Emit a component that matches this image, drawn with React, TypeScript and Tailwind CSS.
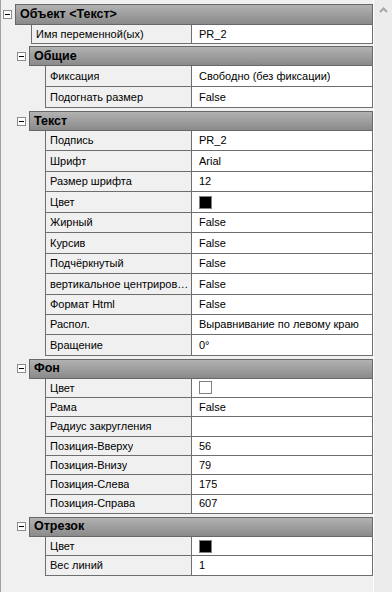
import React from "react";

type Row = { name: string; value?: string; color?: string };

type Section = {
  title: string;
  headerH: string;
  rowH: string;
  gap: string;
  rows: Row[];
};

const sections: Section[] = [
  {
    title: "Общие",
    headerH: "h-[20px]",
    rowH: "h-[21px]",
    gap: "mb-[3px]",
    rows: [
      { name: "Фиксация", value: "Свободно (без фиксации)" },
      { name: "Подогнать размер", value: "False" },
    ],
  },
  {
    title: "Текст",
    headerH: "h-[20px]",
    rowH: "h-[20.45px]",
    gap: "mb-[3px]",
    rows: [
      { name: "Подпись", value: "PR_2" },
      { name: "Шрифт", value: "Arial" },
      { name: "Размер шрифта", value: "12" },
      { name: "Цвет", color: "#000000" },
      { name: "Жирный", value: "False" },
      { name: "Курсив", value: "False" },
      { name: "Подчёркнутый", value: "False" },
      { name: "вертикальное центрирование", value: "False" },
      { name: "Формат Html", value: "False" },
      { name: "Распол.", value: "Выравнивание по левому краю" },
      { name: "Вращение", value: "0°" },
    ],
  },
  {
    title: "Фон",
    headerH: "h-[20px]",
    rowH: "h-[19.29px]",
    gap: "mb-[3px]",
    rows: [
      { name: "Цвет", color: "#ffffff" },
      { name: "Рама", value: "False" },
      { name: "Радиус закругления", value: "" },
      { name: "Позиция-Вверху", value: "56" },
      { name: "Позиция-Внизу", value: "79" },
      { name: "Позиция-Слева", value: "175" },
      { name: "Позиция-Справа", value: "607" },
    ],
  },
  {
    title: "Отрезок",
    headerH: "h-[20px]",
    rowH: "h-[19.5px]",
    gap: "",
    rows: [
      { name: "Цвет", color: "#000000" },
      { name: "Вес линий", value: "1" },
    ],
  },
];

const Minus = () => (
  <div className="w-[9px] h-[9px] border border-[#8c8c8c] bg-white flex items-center justify-center">
    <div className="w-[5px] h-px bg-black" />
  </div>
);

const Header = ({ title, h }: { title: string; h: string }) => (
  <div className={`flex ${h}`}>
    <div className="w-[14px] shrink-0 flex items-center justify-center pr-px">
      <Minus />
    </div>
    <div className="flex-1 flex items-center pl-[4px] border border-[#686868] bg-gradient-to-b from-[#b2b2b2] to-[#8a8a8a] text-[12.5px] font-bold text-black">
      {title}
    </div>
  </div>
);

const PropRow = ({ row, h, indent }: { row: Row; h: string; indent: string }) => (
  <div className={`flex ${h}`}>
    <div className={`${indent} shrink-0`} />
    <div className="flex-1 min-w-0 flex items-center pl-[4px] pr-[2px] bg-[#f0f0f0] border-l border-b border-[#6e6e6e]">
      <span className="truncate">{row.name}</span>
    </div>
    <div className="w-[182px] shrink-0 flex items-center pl-[7px] bg-white border-l border-r border-b border-[#6e6e6e]">
      {row.color ? (
        <div
          className="w-[13px] h-[13px] border border-[#808080]"
          style={{ backgroundColor: row.color }}
        />
      ) : (
        <span className="truncate">{row.value}</span>
      )}
    </div>
  </div>
);

export default function App() {
  return (
    <div
      className="w-[392px] h-[592px] bg-[#f0f0f0] flex border-l border-[#a0a0a0] text-[11px] text-black overflow-hidden"
      style={{ fontFamily: '"Liberation Sans", Arial, sans-serif' }}
    >
      <div className="w-[372px] shrink-0 pt-[4px] flex flex-col">
        <div className="flex flex-col mb-[2px]">
          <Header title="Объект <Текст>" h="h-[21px]" />
          <PropRow row={{ name: "Имя переменной(ых)", value: "PR_2" }} h="h-[19px]" indent="w-[30px]" />
        </div>
        {sections.map((s) => (
          <div key={s.title} className={`flex flex-col ${s.gap}`}>
            <div className="pl-[14px]">
              <Header title={s.title} h={s.headerH} />
            </div>
            {s.rows.map((r, i) => (
              <PropRow key={`${s.title}_${i}`} row={r} h={s.rowH} indent="w-[44px]" />
            ))}
          </div>
        ))}
      </div>
      <div className="flex-1 border-l border-white bg-[#ececec] flex flex-col items-center pt-[7px]">
        <svg width="9" height="6" viewBox="0 0 9 6">
          <polyline points="1,5 4.5,1.5 8,5" fill="none" stroke="#a6a6a6" strokeWidth="2" />
        </svg>
      </div>
    </div>
  );
}
